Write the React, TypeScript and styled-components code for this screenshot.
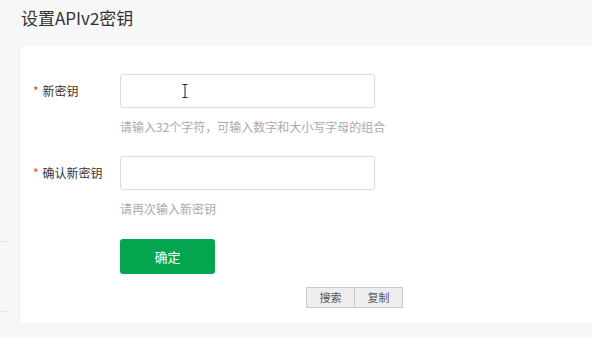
import styled, { createGlobalStyle } from "styled-components";

const GlobalStyle = createGlobalStyle`
  html, body {
    margin:0;
    padding:0;
    background:#f7f7f7;
    font-family:"Noto Sans CJK SC", "Noto Sans", "Liberation Sans", sans-serif;
    color:#333;
  }
`;

const Page = styled.div`
  display:flex;
  width:592px;
  height:338px;
  overflow:hidden;
`;

const Gutter = styled.div`
  width:21px;
  flex-shrink:0;
  display:flex;
  flex-direction:column;
  padding-top:241px;
  gap:69px;
`;

const Rule = styled.div`
  width:7px;
  height:1px;
  background:#e2e2e2;
`;

const Main = styled.div`
  flex:1;
  display:flex;
  flex-direction:column;
`;

const Title = styled.div`
  height:46px;
  line-height:36px;
  font-size:17px;
  color:#333;
`;

const Card = styled.div`
  position:relative;
  background:#fff;
  padding:28px 0 49px 12px;
  display:flex;
  flex-direction:column;
`;

const Row = styled.div<{ $gap?: number }>`
  display:flex;
  margin-bottom:${({ $gap }) => $gap ?? 0}px;
`;

const Label = styled.div`
  width:87px;
  height:34px;
  line-height:34px;
  font-size:12px;
  color:#333;
  flex-shrink:0;
`;

const Star = styled.span`
  color:#e64340;
  margin-right:4px;
`;

const Field = styled.div`
  display:flex;
  flex-direction:column;
`;

const InputWrap = styled.div`
  position:relative;
`;

const Input = styled.input`
  box-sizing:border-box;
  width:255px;
  height:34px;
  border:1px solid #dcdcdc;
  border-radius:3px;
  background:#fff;
  padding:0 10px;
  outline:none;
  font-family:inherit;
`;

const Hint = styled.div`
  margin-top:10px;
  line-height:18px;
  font-size:12px;
  color:#aaa;
  white-space:nowrap;
`;

const Cursor = styled.svg`
  position:absolute;
  left:62px;
  top:10px;
`;

const Submit = styled.button`
  margin-left:87px;
  width:95px;
  height:35px;
  border:none;
  border-radius:3px;
  background:#03a64f;
  color:#fff;
  font-size:13px;
  font-family:inherit;
`;

const Popup = styled.div`
  position:absolute;
  left:285px;
  top:241px;
  display:flex;
  border:1px solid #c9c9c9;
  background:#eeeeee;
`;

const PopButton = styled.div<{ $divider?: boolean }>`
  width:47px;
  height:19px;
  line-height:19px;
  text-align:center;
  font-size:11px;
  color:#555;
  border-left:${({ $divider }) => ($divider ? "1px solid #c9c9c9" : "none")};
`;

const App = () => (
  <>
    <GlobalStyle />
    <Page>
      <Gutter>
        <Rule />
        <Rule />
      </Gutter>
      <Main>
        <Title>设置APIv2密钥</Title>
        <Card>
          <Row $gap={20}>
            <Label><Star>*</Star>新密钥</Label>
            <Field>
              <InputWrap>
                <Input />
                <Cursor width="6" height="14" viewBox="0 0 6 14">
                  <path d="M0.5 0.5h5M3 0.5v13M0.5 13.5h5" stroke="#222" strokeWidth="1" fill="none" />
                </Cursor>
              </InputWrap>
              <Hint>请输入32个字符，可输入数字和大小写字母的组合</Hint>
            </Field>
          </Row>
          <Row $gap={21}>
            <Label><Star>*</Star>确认新密钥</Label>
            <Field>
              <Input />
              <Hint>请再次输入新密钥</Hint>
            </Field>
          </Row>
          <Submit>确定</Submit>
          <Popup>
            <PopButton>搜索</PopButton>
            <PopButton $divider>复制</PopButton>
          </Popup>
        </Card>
      </Main>
    </Page>
  </>
);

export default App;
